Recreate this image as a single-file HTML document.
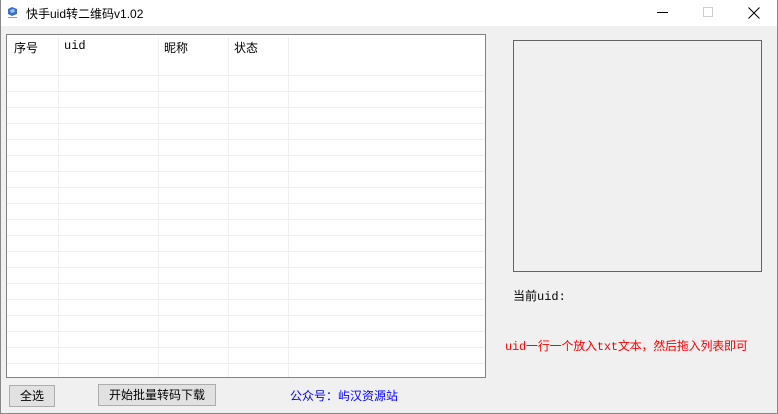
<!DOCTYPE html>
<html><head><meta charset="utf-8"><style>
*{margin:0;padding:0;box-sizing:border-box}
body{width:778px;height:414px;overflow:hidden;background:#f0f0f0;font-family:"Liberation Sans","Noto Sans CJK SC",sans-serif;font-size:12px;position:relative}
.abs{position:absolute}
#frame{left:0;top:0;width:778px;height:414px;border:1px solid #888;border-top:none}
#title{left:0;top:0;width:778px;height:26px;background:#fff}
#list{left:6px;top:34px;width:480px;height:344px;background:#fff;border:1px solid #828282;overflow:hidden}
.hl{position:absolute;left:0;width:480px;height:1px;background:#f0f0f0}
.vl{position:absolute;top:2px;width:1px;height:340px;background:#f0f0f0}
.h{position:absolute;top:4px;font-size:12px;color:#000}
.btn{position:absolute;background:#e1e1e1;border:1px solid #adadad;text-align:center;font-size:12px;line-height:20px}
</style></head><body>
<div class="abs" id="title"></div>
<svg class="abs" style="left:7px;top:6px" width="11" height="13" viewBox="0 0 11 13"><path d="M1 3L5 1L10 3L10 8L5 10L1 8Z" fill="#3a6fc4"/><path d="M3 4L7 3L8 6L4 7Z" fill="#9fc3ee"/><rect x="1" y="11" width="9" height="1" fill="#8aa"/></svg>
<div class="abs" style="left:26px;top:5px;font-size:12px;">快手uid转二维码v1.02</div>
<div class="abs" style="left:657px;top:12px;width:11px;height:1px;background:#000"></div>
<div class="abs" style="left:703px;top:7px;width:10px;height:10px;border:1px solid #ccc"></div>
<svg class="abs" style="left:748px;top:7px" width="12" height="12"><path d="M0.5 0.5L11.5 11.5M11.5 0.5L0.5 11.5" stroke="#000" stroke-width="1"/></svg>
<div class="abs" id="frame"></div>
<div class="abs" id="list">
<div class="h" style="left:7px">序号</div>
<div class="h" style="left:57px;font-family:'Liberation Mono',monospace">uid</div>
<div class="h" style="left:157px">昵称</div>
<div class="h" style="left:227px">状态</div>
<div class="vl" style="left:51px"></div><div class="vl" style="left:151px"></div><div class="vl" style="left:221px"></div><div class="vl" style="left:281px"></div>
<script>for(let y=40;y<344;y+=16)document.write('<div class="hl" style="top:'+y+'px"></div>')</script>
</div>
<div class="abs" style="left:513px;top:40px;width:249px;height:232px;border:1px solid #646464"></div>
<div class="abs" style="left:513px;top:287px;font-size:12px">当前<span style="font-family:'Liberation Mono',monospace">uid:</span></div>
<div class="abs" style="left:505px;top:337px;font-size:12px;color:#f00;letter-spacing:-0.2px"><span style="font-family:'Liberation Mono',monospace">uid</span>一行一个放入<span style="font-family:'Liberation Mono',monospace">txt</span>文本，然后拖入列表即可</div>
<div class="btn" style="left:9px;top:385px;width:46px;height:22px">全选</div>
<div class="btn" style="left:98px;top:384px;width:118px;height:22px">开始批量转码下载</div>
<div class="abs" style="left:290px;top:387px;font-size:12px;color:#00f">公众号：屿汉资源站</div>
</body></html>
